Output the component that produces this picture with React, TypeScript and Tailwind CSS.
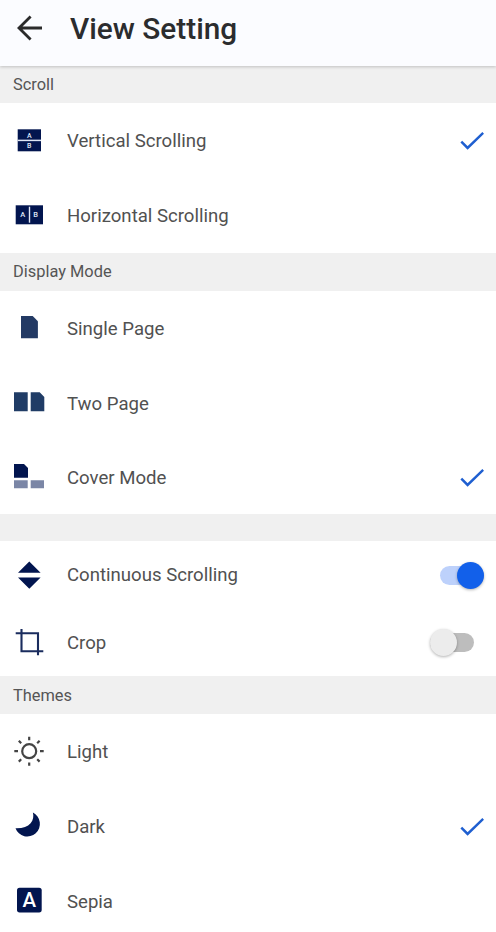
import type { ReactNode } from "react";
import clsx from "clsx";

const VerticalIcon = () => (
  <>
    <path fill="#02154f" d="M5.7 5.3H29v22H5.7z" />
    <path stroke="#dfe6f5" strokeWidth="1.5" d="M5.7 16.4H29" />
    <text x="17.3" y="13.8" fontSize="7" fontWeight="500" textAnchor="middle" fill="#dfe6f5">A</text>
    <text x="17.3" y="23.9" fontSize="7" fontWeight="500" textAnchor="middle" fill="#dfe6f5">B</text>
  </>
);

const HorizontalIcon = () => (
  <>
    <path fill="#02154f" d="M3.7 6.3H31v19H3.7z" />
    <path stroke="#dfe6f5" strokeWidth="1.4" d="M17.5 7.7v16" />
    <text x="10.7" y="18.3" fontSize="7.5" fontWeight="500" textAnchor="middle" fill="#dfe6f5">A</text>
    <text x="23.5" y="18.3" fontSize="7.5" fontWeight="500" textAnchor="middle" fill="#dfe6f5">B</text>
  </>
);

const SingleIcon = () => <path fill="#233a64" d="M9 4h11.7l5.2 5.3v17H9z" />;

const TwoPageIcon = () => <path fill="#203c66" d="M2 5.3h13.7v19H2zM18.7 5.3h9l4.6 4.7v14.3H18.7z" />;

const CoverIcon = () => (
  <>
    <path fill="#02154f" d="M2 3h10l4 3.9v9.8H2z" />
    <path fill="#7b86a6" d="M2 19.3h13.7v8H2zM18.7 19.3H32v8H18.7z" />
  </>
);

const ContinuousIcon = () => <path fill="#02154f" d="M17.3 2.4l11.3 11.4H6zM6 18.4h22.6L17.3 29.8z" />;

const CropIcon = () => (
  <path fill="none" stroke="#1a2c5e" strokeWidth="2.1" d="M3.7 7.2H26v22M9.5 3v22.3h21.8" />
);

const SunIcon = () => (
  <g fill="none" stroke="#444" strokeWidth="2.2">
    <circle cx="17.2" cy="16.2" r="7" />
    <path d="M17.2 1.8v3.4M17.2 27.4v3.4M2.3 16.2h3.7M28 16.2h3.7M6.8 5.8l2.4 2.4M25.2 24.2l2.4 2.4M6.8 26.6l2.4-2.4M25.2 8.2l2.4-2.4" />
  </g>
);

const MoonIcon = () => (
  <path fill="#02154f" d="M20.9 2.6A12.6 12.6 0 1 1 3.5 18.3C10.5 18.6 15.5 16.6 18.6 13.2C21.4 10 21.8 6.4 20.9 2.6z" />
);

const SepiaIcon = () => (
  <>
    <rect x="5" y="2.7" width="24.7" height="24.7" rx="2.6" fill="#02154f" />
    <text x="17.3" y="22.4" fontSize="20.5" fontWeight="500" textAnchor="middle" fill="#fff">A</text>
  </>
);

function Check() {
  return (
    <svg className="mr-3 h-5 w-6" viewBox="0 0 24 20" fill="none" stroke="#1f5fd0" strokeWidth="2.5">
      <path d="M1.3 10.6l6.3 6.3L23.2 1.9" />
    </svg>
  );
}

function Toggle({ on }: { on?: boolean }) {
  return (
    <span
      className={clsx(
        "flex h-[19px] w-11 items-center rounded-full",
        on ? "mr-3 justify-end bg-[#bdd1fb]" : "mr-[22.5px] bg-[#bdbdbd]"
      )}
    >
      <span
        className={clsx(
          "size-[27px] shrink-0 rounded-full shadow-[0_1px_3px_rgba(0,0,0,0.3)]",
          on ? "bg-[#1260ea]" : "bg-[#ececec]"
        )}
      />
    </span>
  );
}

type RowProps = { icon: ReactNode; label: string; height?: string; children?: ReactNode };

function Row({ icon, label, height = "h-[75px]", children }: RowProps) {
  return (
    <div className={clsx("flex shrink-0 items-center pl-3", height)}>
      <svg className="size-[33px] shrink-0 overflow-visible" viewBox="0 0 33 33">
        {icon}
      </svg>
      <span className="ml-[22px] flex-1 text-[18.6px] leading-6 text-[#515151]">{label}</span>
      {children}
    </div>
  );
}

function Section({ title, height = "h-[38px]" }: { title?: string; height?: string }) {
  return (
    <div className={clsx("flex shrink-0 items-center bg-[#f0f0f0] pl-[13px] text-[16.4px] text-[#555]", height)}>
      {title}
    </div>
  );
}

export default function App() {
  return (
    <div className="flex h-[932px] w-[496px] flex-col overflow-hidden bg-white font-[Roboto,sans-serif]">
      <header className="z-10 flex h-[66px] shrink-0 items-center bg-[#fbfcff] pb-2 pl-4 shadow-[0_1px_3px_rgba(0,0,0,0.2)]">
        <svg className="h-7 w-7" viewBox="0 0 28 28" fill="none" stroke="#2b2b2b" strokeWidth="2.8">
          <path d="M26 13H3M14.6 1.5L3 13l11.6 11.5" />
        </svg>
        <h1 className="ml-[26px] text-[29.8px] font-medium leading-9 text-[#2b2c2e]">View Setting</h1>
      </header>

      <Section title="Scroll" height="h-[37px] pt-0.5" />
      <Row icon={<VerticalIcon />} label="Vertical Scrolling">
        <Check />
      </Row>
      <Row icon={<HorizontalIcon />} label="Horizontal Scrolling" />

      <Section title="Display Mode" />
      <Row icon={<SingleIcon />} label="Single Page" />
      <Row icon={<TwoPageIcon />} label="Two Page" />
      <Row icon={<CoverIcon />} label="Cover Mode" height="h-[73px]">
        <Check />
      </Row>

      <Section height="h-[27px]" />
      <Row icon={<ContinuousIcon />} label="Continuous Scrolling" height="h-[68px]">
        <Toggle on />
      </Row>
      <Row icon={<CropIcon />} label="Crop" height="h-[67px]">
        <Toggle />
      </Row>

      <Section title="Themes" height="h-[38px] pt-0.5" />
      <Row icon={<SunIcon />} label="Light" />
      <Row icon={<MoonIcon />} label="Dark">
        <Check />
      </Row>
      <Row icon={<SepiaIcon />} label="Sepia" />
    </div>
  );
}
